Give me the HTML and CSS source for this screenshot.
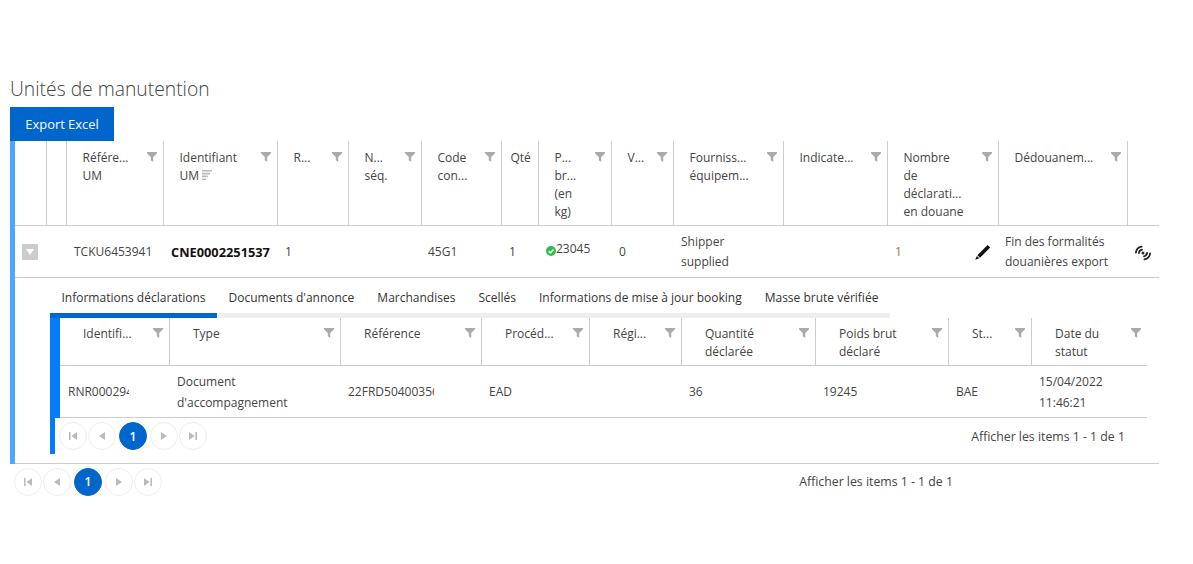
FILE: index.html
```html
<!DOCTYPE html>
<html lang="fr">
<head>
<meta charset="utf-8">
<title>Unités de manutention</title>
<link rel="stylesheet" href="styles.css">
</head>
<body>
<svg class="defs" width="0" height="0" aria-hidden="true">
  <symbol id="f" viewBox="0 0 10 10"><path d="M0 0H10V1.2L6.2 5V10L3.8 8.2V5L0 1.2Z"/></symbol>
  <symbol id="first" viewBox="0 0 10 10"><path d="M1 1H2.6V9H1ZM9 1V9L3.4 5Z"/></symbol>
  <symbol id="prev" viewBox="0 0 10 10"><path d="M8 1V9L2 5Z"/></symbol>
  <symbol id="next" viewBox="0 0 10 10"><path d="M2 1V9L8 5Z"/></symbol>
  <symbol id="last" viewBox="0 0 10 10"><path d="M9 1H7.4V9H9ZM1 1V9L6.6 5Z"/></symbol>
</svg>
<main class="page">
  <h1 class="title">Unités de manutention</h1>
  <button class="export">Export Excel</button>
  <div class="grid">
    <table class="main">
      <colgroup>
        <col class="c32"><col class="c20"><col class="c97"><col class="c114"><col class="c71"><col class="c73"><col class="c80"><col class="c37"><col class="c73"><col class="c62"><col class="c110"><col class="c104"><col class="c111"><col class="c129"><col class="c31">
      </colgroup>
      <thead>
        <tr>
          <th></th><th></th>
          <th><div class="h"><span>Référe...<br>UM</span><svg class="fi"><use href="#f"/></svg></div></th>
          <th><div class="h"><span>Identifiant<br>UM<svg class="sort" viewBox="0 0 10 10"><path d="M0 0H10V1.6H0ZM0 2.8H8V4.4H0ZM0 5.6H6V7.2H0ZM0 8.4H4V10H0Z"/></svg></span><svg class="fi"><use href="#f"/></svg></div></th>
          <th><div class="h"><span>R...</span><svg class="fi"><use href="#f"/></svg></div></th>
          <th><div class="h"><span>N...<br>séq.</span><svg class="fi"><use href="#f"/></svg></div></th>
          <th><div class="h"><span>Code<br>con...</span><svg class="fi"><use href="#f"/></svg></div></th>
          <th><div class="h tight"><span>Qté</span></div></th>
          <th><div class="h"><span>P...<br>br...<br>(en<br>kg)</span><svg class="fi"><use href="#f"/></svg></div></th>
          <th><div class="h"><span>V...</span><svg class="fi"><use href="#f"/></svg></div></th>
          <th><div class="h"><span>Fourniss...<br>équipem...</span><svg class="fi"><use href="#f"/></svg></div></th>
          <th><div class="h"><span>Indicate...</span><svg class="fi"><use href="#f"/></svg></div></th>
          <th><div class="h"><span>Nombre<br>de<br>déclarati...<br>en douane</span><svg class="fi"><use href="#f"/></svg></div></th>
          <th><div class="h"><span>Dédouanem...</span><svg class="fi"><use href="#f"/></svg></div></th>
          <th></th>
        </tr>
      </thead>
      <tbody>
        <tr class="row">
          <td class="exp"><span class="toggle"></span></td>
          <td></td>
          <td>TCKU6453941</td>
          <td class="strong">CNE0002251537</td>
          <td>1</td>
          <td></td>
          <td class="near">45G1</td>
          <td>1</td>
          <td><span class="weight"><svg class="ok" viewBox="0 0 10 10"><circle cx="5" cy="5" r="5" fill="#2fbf4a"/><path d="M2.6 5.1 4.4 6.9 7.5 3.6" fill="none" stroke="#fff" stroke-width="1.5"/></svg>23045</span></td>
          <td>0</td>
          <td>Shipper<br>supplied</td>
          <td></td>
          <td class="count"><div class="count-in"><span class="amber">1</span><svg class="pen" viewBox="0 0 16 16"><path d="M12.6 1 15.2 3.6 5 13.8 2.4 11.2ZM1.9 11.9 4.3 14.3 .2 15.8Z" fill="#111"/></svg></div></td>
          <td class="near">Fin des formalités<br>douanières export</td>
          <td><svg class="signal" viewBox="0 0 16 16" fill="none" stroke="#222" stroke-width="1.8" stroke-linecap="round"><path d="M.9 7.6A7 7 0 0 1 6.6 1.6"/><path d="M3.9 8A4 4 0 0 1 7 4.7"/><path d="M15.1 8.4A7 7 0 0 1 9.4 14.4"/><path d="M12.1 8A4 4 0 0 1 9 11.3"/><circle cx="8" cy="8" r=".6"/></svg></td>
        </tr>
        <tr>
          <td colspan="15" class="detail">
            <div class="tabs">
              <span class="tab active">Informations déclarations</span>
              <span class="tab">Documents d'annonce</span>
              <span class="tab">Marchandises</span>
              <span class="tab">Scellés</span>
              <span class="tab">Informations de mise à jour booking</span>
              <span class="tab">Masse brute vérifiée</span>
            </div>
            <div class="sub">
              <table class="nested">
                <colgroup>
                  <col class="n110"><col class="n171"><col class="n141"><col class="n108"><col class="n92"><col class="n134"><col class="n133"><col class="n83"><col class="n115">
                </colgroup>
                <thead>
                  <tr>
                    <th><div class="h"><span>Identifi...</span><svg class="fi"><use href="#f"/></svg></div></th>
                    <th><div class="h"><span>Type</span><svg class="fi"><use href="#f"/></svg></div></th>
                    <th><div class="h"><span>Référence</span><svg class="fi"><use href="#f"/></svg></div></th>
                    <th><div class="h"><span>Procéd...</span><svg class="fi"><use href="#f"/></svg></div></th>
                    <th><div class="h"><span>Régi...</span><svg class="fi"><use href="#f"/></svg></div></th>
                    <th><div class="h"><span>Quantité<br>déclarée</span><svg class="fi"><use href="#f"/></svg></div></th>
                    <th><div class="h"><span>Poids brut<br>déclaré</span><svg class="fi"><use href="#f"/></svg></div></th>
                    <th><div class="h"><span>St...</span><svg class="fi"><use href="#f"/></svg></div></th>
                    <th><div class="h"><span>Date du<br>statut</span><svg class="fi"><use href="#f"/></svg></div></th>
                  </tr>
                </thead>
                <tbody>
                  <tr>
                    <td class="first"><span class="clip rnr">RNR00029412</span></td>
                    <td>Document<br>d'accompagnement</td>
                    <td><span class="clip ref">22FRD50400356</span></td>
                    <td>EAD</td>
                    <td></td>
                    <td>36</td>
                    <td>19245</td>
                    <td>BAE</td>
                    <td>15/04/2022<br>11:46:21</td>
                  </tr>
                </tbody>
              </table>
              <div class="pager inner">
                <div class="pages">
                  <span class="pg"><svg><use href="#first"/></svg></span>
                  <span class="pg"><svg><use href="#prev"/></svg></span>
                  <span class="pg cur">1</span>
                  <span class="pg"><svg><use href="#next"/></svg></span>
                  <span class="pg"><svg><use href="#last"/></svg></span>
                </div>
                <span class="info">Afficher les items 1 - 1 de 1</span>
              </div>
            </div>
          </td>
        </tr>
      </tbody>
    </table>
  </div>
  <div class="pager outer">
    <div class="pages">
      <span class="pg"><svg><use href="#first"/></svg></span>
      <span class="pg"><svg><use href="#prev"/></svg></span>
      <span class="pg cur">1</span>
      <span class="pg"><svg><use href="#next"/></svg></span>
      <span class="pg"><svg><use href="#last"/></svg></span>
    </div>
    <span class="info">Afficher les items 1 - 1 de 1</span>
  </div>
</main>
</body>
</html>
```
FILE: styles.css
```css
* { box-sizing: border-box; }
html, body { margin: 0; background: #fff; }
body { font-family: "Open Sans", "Noto Sans", "Liberation Sans", sans-serif; font-size: 12px; color: #444; overflow: hidden; height: 564px; }
.defs { position: absolute; }
.page { padding: 76px 0 0 10px; width: 1159px; }
.title { margin: 0; font-size: 19.3px; font-weight: 300; line-height: 26px; height: 31px; color: #444; }
.export { display: block; width: 104px; height: 34px; background: #0066cc; color: #fff; border: 0; padding: 0; font: inherit; font-size: 12.9px; }
.grid { border-left: 5px solid #4da6ff; }
table { border-collapse: separate; border-spacing: 0; table-layout: fixed; }
.main { width: 1144px; }
.c31 { width: 31px; } .c32 { width: 32px; } .c20 { width: 20px; } .c97 { width: 97px; } .c114 { width: 114px; } .c71 { width: 71px; } .c73 { width: 73px; } .c80 { width: 80px; } .c37 { width: 37px; } .c62 { width: 62px; } .c110 { width: 110px; } .c104 { width: 104px; } .c111 { width: 111px; } .c129 { width: 129px; }
th { font-weight: 400; text-align: left; vertical-align: top; padding: 0; }
.main > thead th { height: 85px; border-right: 1px solid #ccc; border-bottom: 1px solid #ccc; }
.main > thead th:last-child { border-right: 0; }
.h { display: flex; justify-content: space-between; align-items: flex-start; line-height: 18px; padding: 8px 6px 0 15.5px; }
.h.tight { padding-left: 8.5px; padding-right: 0; }
.fi { width: 10px; height: 10px; fill: #aaa; flex: none; margin-top: 3px; }
.sort { width: 10px; height: 10px; fill: #bbb; margin-left: 3px; }
.main > tbody > .row > td { height: 52px; padding: 0 0 0 7px; line-height: 20px; border-bottom: 1px solid #ccc; vertical-align: middle; white-space: nowrap; }
.main > tbody > .row > td.near { padding-left: 6px; }
.toggle { display: flex; width: 16px; height: 16px; background: #ccc; position: relative; }
.toggle::after { content: ""; margin: 5px 0 0 4px; border: 4px solid transparent; border-top: 6px solid #fff; border-bottom: 0; height: 0; }
.strong { font-weight: 700; color: #111; font-size: 12.8px; }
.weight { display: inline-flex; align-items: center; position: relative; top: -1px; }
.ok { width: 10px; height: 10px; margin-top: 3px; }
.amber { color: #a8741a; }
.count-in { display: flex; justify-content: space-between; align-items: center; padding-right: 8px; }
.pen { width: 16px; height: 16px; }
.signal { display: block; width: 16px; height: 16px; margin-top: 3px; }
.detail { padding: 0 12px 9px 35px; border-bottom: 1px solid #ccc; vertical-align: top; }
.tabs { display: inline-flex; height: 40px; border-bottom: 5px solid #eee; color: #333; vertical-align: top; }
.tab { padding: 11px 11.5px 0; line-height: 18px; white-space: nowrap; height: 40px; margin-bottom: -5px; }
.tab.active { border-bottom: 5px solid #0066cc; }
.sub { border-left: 5px solid #007bff; width: 1097px; }
.nested { width: 1092px; border-left: 5px solid #007bff; margin-left: 0; }
.n110 { width: 110px; } .n171 { width: 171px; } .n141 { width: 141px; } .n108 { width: 108px; } .n92 { width: 92px; } .n134 { width: 134px; } .n133 { width: 133px; } .n83 { width: 83px; } .n115 { width: 115px; }
.nested th { height: 48px; border-right: 1px solid #ccc; border-bottom: 1px solid #ccc; }
.nested th:last-child { border-right: 0; }
.nested .h { padding: 7px 6px 0 23px; }
.nested td { height: 52px; padding: 0 0 0 7px; line-height: 21px; border-bottom: 1px solid #ccc; vertical-align: middle; white-space: nowrap; }
.nested td.first { padding-left: 8px; }
.clip { display: block; overflow: hidden; }
.rnr { width: 61px; }
.ref { width: 86px; }
.pager { display: flex; justify-content: space-between; align-items: center; }
.pages { display: flex; align-items: center; gap: 1px; }
.inner { height: 36px; padding: 0 22px 0 4px; }
.outer { height: 35px; width: 943px; padding: 0 0 0 4px; }
.pg { display: flex; align-items: center; justify-content: center; width: 28px; height: 28px; border: 1px solid #eee; border-radius: 50%; }
.pg svg { width: 10px; height: 10px; fill: #bbb; }
.pg.cur { margin: 0 2px; background: #0066cc; border-color: #0066cc; color: #fff; font-weight: 600; }
.info { color: #444; white-space: nowrap; font-size: 12.3px; }
```
